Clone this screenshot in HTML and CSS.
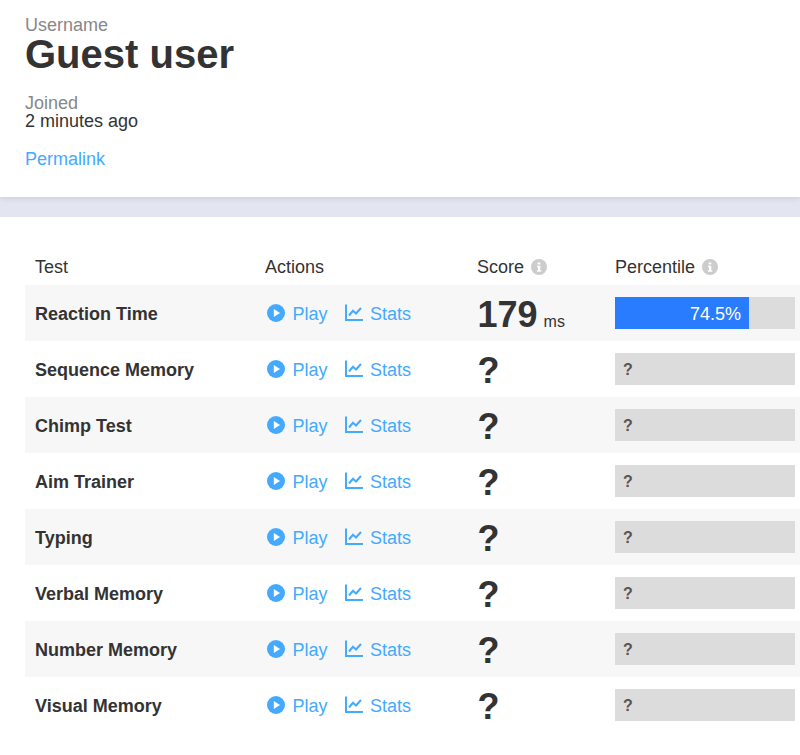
FILE: index.html
```html
<!DOCTYPE html>
<html lang="en">
<head>
<meta charset="utf-8">
<title>Guest user</title>
<link rel="stylesheet" href="styles.css">
</head>
<body>
<svg class="defs" width="0" height="0" aria-hidden="true">
  <symbol id="play" viewBox="0 0 18 18"><circle cx="9" cy="9" r="9" fill="#44aaff"/><path d="M6.800 4.900 13 9l-6.200 4.100z" fill="#fff"/></symbol>
  <symbol id="chart" viewBox="0 0 18 18"><path d="M1 0.500v15.500h17" fill="none" stroke="#44aaff" stroke-width="2"/><path d="M4 11.500 8 6.800l3 2.700 5-5.500" fill="none" stroke="#44aaff" stroke-width="2"/></symbol>
  <symbol id="info" viewBox="0 0 16 16"><circle cx="8" cy="8" r="8" fill="#cccccc"/><path d="M6.600 3.400h2.700v2.200H6.600zM6 6.800h3.300v4.400h1v1.500H6v-1.500h1V8.300H6z" fill="#fff"/></symbol>
</svg>
<header class="profile">
  <div class="label">Username</div>
  <h1 class="name">Guest user</h1>
  <div class="label joined">Joined</div>
  <div class="value">2 minutes ago</div>
  <a class="link permalink" href="#">Permalink</a>
</header>
<div class="band"></div>
<main class="scores">
  <div class="row head">
    <div class="c-test">Test</div>
    <div class="c-actions">Actions</div>
    <div class="c-score">Score <svg class="info"><use href="#info"/></svg></div>
    <div class="c-pct">Percentile <svg class="info"><use href="#info"/></svg></div>
  </div>
  <div class="row alt">
    <div class="c-test title">Reaction Time</div>
    <div class="c-actions"><a class="link action" href="#"><svg class="ico"><use href="#play"/></svg>Play</a><a class="link action" href="#"><svg class="ico"><use href="#chart"/></svg>Stats</a></div>
    <div class="c-score"><span class="big">179</span> <span class="unit">ms</span></div>
    <div class="c-pct"><div class="bar"><div class="fill" style="width:74.5%">74.5%</div></div></div>
  </div>
  <div class="row">
    <div class="c-test title">Sequence Memory</div>
    <div class="c-actions"><a class="link action" href="#"><svg class="ico"><use href="#play"/></svg>Play</a><a class="link action" href="#"><svg class="ico"><use href="#chart"/></svg>Stats</a></div>
    <div class="c-score"><span class="big">?</span></div>
    <div class="c-pct"><div class="bar"><span class="unknown">?</span></div></div>
  </div>
  <div class="row alt">
    <div class="c-test title">Chimp Test</div>
    <div class="c-actions"><a class="link action" href="#"><svg class="ico"><use href="#play"/></svg>Play</a><a class="link action" href="#"><svg class="ico"><use href="#chart"/></svg>Stats</a></div>
    <div class="c-score"><span class="big">?</span></div>
    <div class="c-pct"><div class="bar"><span class="unknown">?</span></div></div>
  </div>
  <div class="row">
    <div class="c-test title">Aim Trainer</div>
    <div class="c-actions"><a class="link action" href="#"><svg class="ico"><use href="#play"/></svg>Play</a><a class="link action" href="#"><svg class="ico"><use href="#chart"/></svg>Stats</a></div>
    <div class="c-score"><span class="big">?</span></div>
    <div class="c-pct"><div class="bar"><span class="unknown">?</span></div></div>
  </div>
  <div class="row alt">
    <div class="c-test title">Typing</div>
    <div class="c-actions"><a class="link action" href="#"><svg class="ico"><use href="#play"/></svg>Play</a><a class="link action" href="#"><svg class="ico"><use href="#chart"/></svg>Stats</a></div>
    <div class="c-score"><span class="big">?</span></div>
    <div class="c-pct"><div class="bar"><span class="unknown">?</span></div></div>
  </div>
  <div class="row">
    <div class="c-test title">Verbal Memory</div>
    <div class="c-actions"><a class="link action" href="#"><svg class="ico"><use href="#play"/></svg>Play</a><a class="link action" href="#"><svg class="ico"><use href="#chart"/></svg>Stats</a></div>
    <div class="c-score"><span class="big">?</span></div>
    <div class="c-pct"><div class="bar"><span class="unknown">?</span></div></div>
  </div>
  <div class="row alt">
    <div class="c-test title">Number Memory</div>
    <div class="c-actions"><a class="link action" href="#"><svg class="ico"><use href="#play"/></svg>Play</a><a class="link action" href="#"><svg class="ico"><use href="#chart"/></svg>Stats</a></div>
    <div class="c-score"><span class="big">?</span></div>
    <div class="c-pct"><div class="bar"><span class="unknown">?</span></div></div>
  </div>
  <div class="row">
    <div class="c-test title">Visual Memory</div>
    <div class="c-actions"><a class="link action" href="#"><svg class="ico"><use href="#play"/></svg>Play</a><a class="link action" href="#"><svg class="ico"><use href="#chart"/></svg>Stats</a></div>
    <div class="c-score"><span class="big">?</span></div>
    <div class="c-pct"><div class="bar"><span class="unknown">?</span></div></div>
  </div>
</main>
</body>
</html>
```
FILE: styles.css
```css
* { box-sizing: border-box; }
html, body { margin: 0; padding: 0; }
body {
  width: 800px;
  height: 755px;
  overflow: hidden;
  background: #fff;
  color: #333;
  font-family: "Liberation Sans", Arial, sans-serif;
  font-size: 18px;
}
.defs { display: block; height: 0; }
.profile {
  height: 197px;
  padding: 15px 25px 0;
  background: #fff;
  position: relative;
  box-shadow: 0 1px 6px rgba(0, 0, 0, 0.12);
}
.label { color: #888; line-height: 20px; }
.name {
  margin: 0;
  font-size: 40px;
  line-height: 38px;
  font-weight: 700;
  color: #333;
}
.joined { margin-top: 21px; line-height: 18px; }
.value { line-height: 18px; }
.link { color: #44aaff; text-decoration: none; }
.permalink { display: block; margin-top: 19px; line-height: 20px; }
.band { height: 20px; background: #e3e5f0; }
.scores { padding: 33px 0 0 25px; }
.row {
  display: grid;
  grid-template-columns: 230px 222px 138px 185px;
  height: 56px;
  align-items: center;
}
.row.head { height: 35px; align-items: center; }
.row.alt { background: #f7f7f7; }
.c-test { padding-left: 10px; }
.row:not(.head) .title { padding-top: 2px; }
.title { font-weight: 700; }
.c-actions { display: flex; gap: 15px; padding-left: 10px; }
.row:not(.head) .c-actions { padding-top: 2px; }
.action { display: flex; align-items: center; gap: 7.5px; }
.ico { width: 18px; height: 18px; margin-left: 2px; margin-top: -2px; }
.c-score { padding-left: 0; }
.row:not(.head) .c-score { padding-top: 3px; }
.head .c-score { display: flex; align-items: center; gap: 7px; }
.head .c-pct { display: flex; align-items: center; gap: 7px; }
.info { width: 16px; height: 16px; margin-top: -2px; }
.big { font-size: 36px; font-weight: 700; line-height: 50px; padding-left: 0.5px; }
.unit { font-size: 16px; margin-left: 1px; }
.bar {
  width: 180px;
  height: 32px;
  background: #dcdcdc;
  display: flex;
  align-items: center;
}
.fill {
  height: 32px;
  line-height: 34px;
  background: #2a7cff;
  color: #fff;
  text-align: right;
  padding-right: 8px;
}
.unknown { padding-left: 8px; font-size: 16px; font-weight: 700; color: #555; padding-top: 2px; }
```
